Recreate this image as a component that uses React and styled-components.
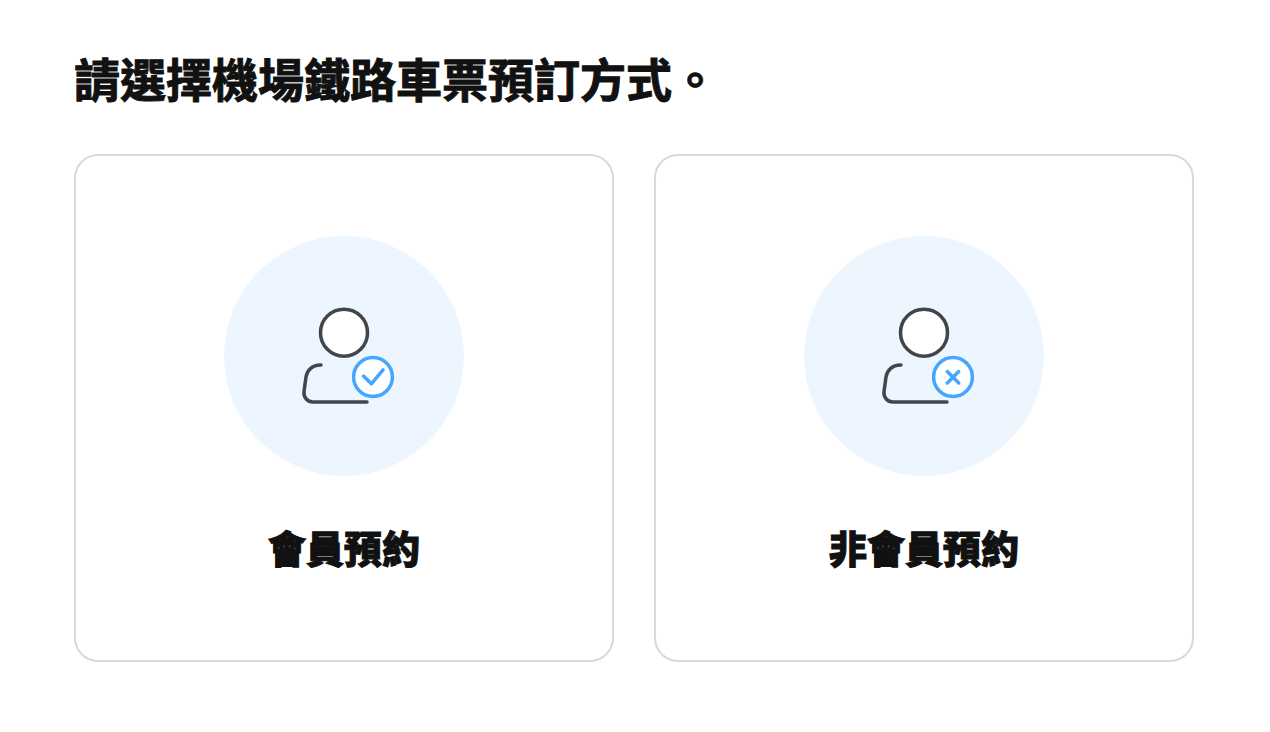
import React from "react";
import styled, { createGlobalStyle } from "styled-components";

const GlobalStyle = createGlobalStyle`
    *, *::before, *::after {
      box-sizing: border-box;
    }

    body {
      margin: 0;
      background: #fff;
      color: #111;
      font-family: "Noto Sans CJK TC", "Noto Sans", sans-serif;
    }
`

const Page = styled.main`
    padding: 41px 76px 70px 74px;
`

const Heading = styled.h1`
    margin: 0 0 41px;
    font-size: 46px;
    font-weight: 700;
    line-height: 72px;
    -webkit-text-stroke: 1px currentColor;
`

const Options = styled.div`
    display: grid;
    grid-template-columns: 1fr 1fr;
    gap: 40px;
`

const OptionCard = styled.a`
    padding: 80px 24px 82px;
    display: flex;
    flex-direction: column;
    align-items: center;
    gap: 40px;

    border: 2px solid #d5dae1;
    border-radius: 24px;
    color: inherit;
    text-decoration: none;
`

const OptionIcon = styled.svg`
    width: 240px;
    height: 240px;
    border-radius: 50%;
    background: #edf6ff;
    fill: none;
    stroke-width: 3.5;
    stroke-linecap: round;
    stroke-linejoin: round;
`

const OptionTitle = styled.strong`
    font-size: 38px;
    font-weight: 900;
    line-height: 62px;
    -webkit-text-stroke: 1px currentColor;
`

const CHECK_MARK = "M139.5 140L147.3 147.8L159 133.8";
const CROSS_MARK = "M143.3 135.5L154.7 147M154.7 135.5L143.3 147";

const OPTIONS = [
    { id: "member", title: "會員預約", mark: CHECK_MARK },
    { id: "guest", title: "非會員預約", mark: CROSS_MARK },
];

const UserIcon = ({ mark }) => (
    <OptionIcon viewBox="0 0 240 240" aria-hidden="true">
        <g stroke="#42464b">
            <circle cx="120" cy="96.7" r="23.5" fill="#fff" />
            <path d="M97 129C88.5 128.8 83 134 82 141L80 155.5C79.3 161.5 83.5 166 89 166H143" />
        </g>
        <g stroke="#46a5ff">
            <circle cx="149" cy="141" r="19.4" fill="#fff" />
            <path d={mark} />
        </g>
    </OptionIcon>
)

const App = () => (
    <>
        <GlobalStyle />
        <Page>
            <Heading>請選擇機場鐵路車票預訂方式。</Heading>

            <Options>
                {OPTIONS.map(option => (
                    <OptionCard key={option.id} href={"#" + option.id}>
                        <UserIcon mark={option.mark} />
                        <OptionTitle>{option.title}</OptionTitle>
                    </OptionCard>
                ))}
            </Options>
        </Page>
    </>
)

export default App;
